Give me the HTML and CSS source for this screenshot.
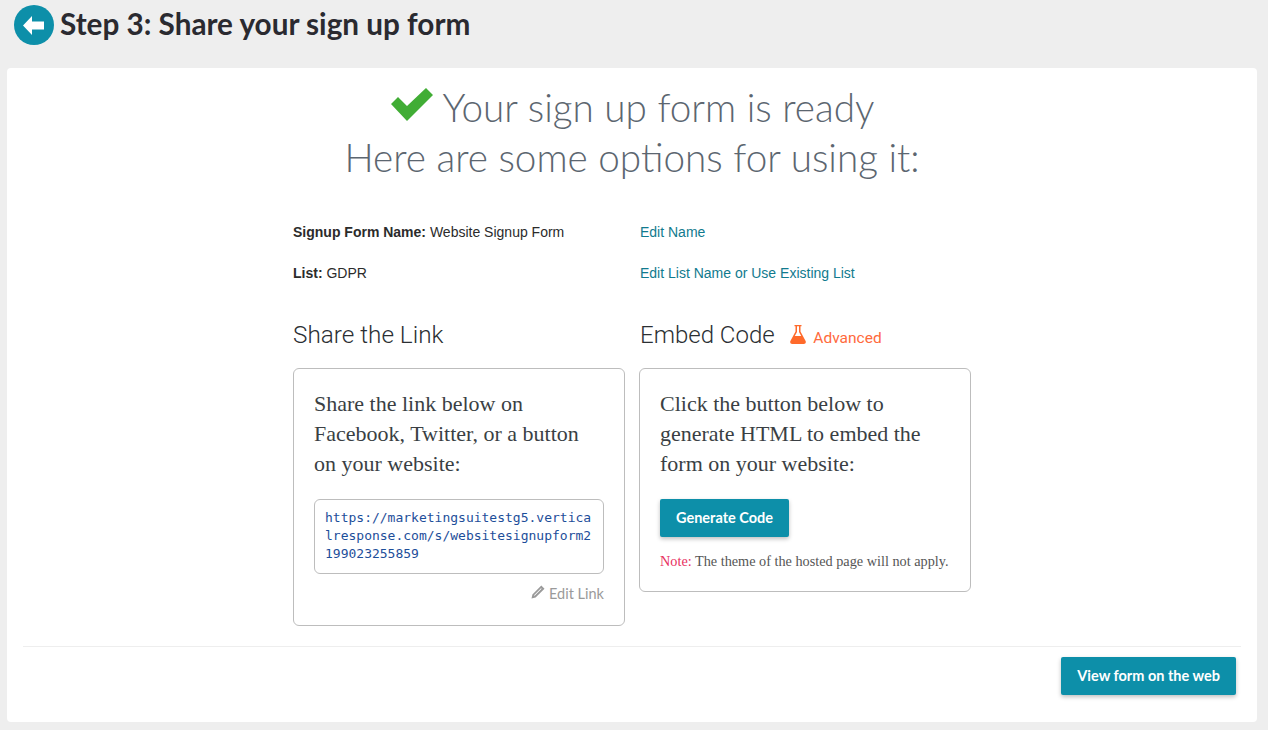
FILE: index.html
```html
<!DOCTYPE html>
<html lang="en">
<head>
  <meta charset="UTF-8">
  <title>Step 3: Share your sign up form</title>
  <link rel="stylesheet" href="styles.css">
</head>
<body>
  <!-- Header -->
  <div class="page-header">
    <a class="back-button" href="#">
      <svg width="40" height="40" viewBox="0 0 40 40"><circle cx="20" cy="20" r="20" fill="#0D8FA9"/><path d="M9 20.5 L18 11 V16.5 H30 V24.5 H18 V30 Z" fill="#fff"/></svg>
    </a>
    <h1 class="page-title">Step 3: Share your sign up form</h1>
  </div>

  <div class="card">
    <!-- Heading -->
    <div class="ready-heading">
      <div>
        <svg class="check" width="44" height="36" viewBox="0 0 44 36"><path d="M1 17 L8 10 L17 19 L36 1 L43 8 L17 34 Z" fill="#41AD35"/></svg>
        Your sign up form is ready
      </div>
      <div>Here are some options for using it:</div>
    </div>

    <div class="options">
      <!-- Form details -->
      <div class="detail-row">
        <div><strong>Signup Form Name:</strong> Website Signup Form</div>
        <a href="#">Edit Name</a>
      </div>
      <div class="detail-row">
        <div><strong>List:</strong> GDPR</div>
        <a href="#">Edit List Name or Use Existing List</a>
      </div>

      <div class="columns">
        <div>
          <h2 class="column-title">Share the Link</h2>
          <div class="box">
            <p class="box-text">Share the link below on Facebook, Twitter, or a button on your website:</p>
            <div class="link-box">https://marketingsuitestg5.vertica<br>lresponse.com/s/websitesignupform2<br>199023255859</div>
            <div class="edit-link">
              <svg width="14" height="14" viewBox="0 0 14 14"><path d="M10.3 0.5 L13.5 3.7 L4.6 12.6 L0.5 13.5 L1.4 9.4 Z M10 3.2 L3 10.2 L3.6 10.8 L10.6 3.8 Z" fill="#9A9A9A" fill-rule="evenodd"/></svg>
              Edit Link
            </div>
          </div>
        </div>
        <div>
          <h2 class="column-title embed-title">Embed Code
            <span class="advanced">
              <svg width="16" height="19" viewBox="0 0 16 19"><path d="M4.5 0 H11.5 V1.3 H10.5 V6.5 L15.6 16 C16.3 17.5 15.4 19 13.8 19 H2.2 C0.6 19 -0.3 17.5 0.4 16 L5.5 6.5 V1.3 H4.5 Z M7 1.3 V7 L4.8 11 H11.2 L9 7 V1.3 Z" fill="#FF6A2B" fill-rule="evenodd"/></svg>
              Advanced
            </span>
          </h2>
          <div class="box">
            <p class="box-text">Click the button below to generate HTML to embed the form on your website:</p>
            <a class="teal-button" href="#">Generate Code</a>
            <p class="note"><span class="note-label">Note:</span> The theme of the hosted page will not apply.</p>
          </div>
        </div>
      </div>
    </div>

    <!-- Footer -->
    <div class="card-footer">
      <a class="teal-button" href="#">View form on the web</a>
    </div>
  </div>
</body>
</html>
```

FILE: styles.css
```css
* {
  box-sizing: border-box;
  margin: 0;
  padding: 0;
}

body {
  font-family: 'Liberation Sans', sans-serif;
  background-color: #EEEEEE;
  color: #2B2B2B;
  height: 730px;
  overflow: hidden;
}

a {
  text-decoration: none;
}

.page-header {
  height: 68px;
  display: flex;
  align-items: flex-start;
  padding: 5px 0 0 14px;
  gap: 6px;
}

.back-button {
  display: block;
  height: 40px;
}

.page-title {
  font-family: 'Lato', sans-serif;
  font-size: 29.7px;
  font-weight: 700;
  line-height: 38px;
  color: #2A2A30;
}

.card {
  margin: 0 11px 0 7px;
  height: 654px;
  background-color: #FFFFFF;
  border-radius: 4px;
  padding: 14px 16px 0;
}

.ready-heading {
  font-family: 'Lato', sans-serif;
  font-weight: 300;
  font-size: 38.7px;
  line-height: 50px;
  text-align: center;
  color: #5C6670;
  height: 134px;
}

.check {
  vertical-align: -1px;
}

.options {
  width: 678px;
  margin-left: 270px;
  font-size: 14px;
}

.detail-row {
  display: grid;
  grid-template-columns: 347px 1fr;
  height: 41px;
  line-height: 32px;
}

.detail-row a {
  color: #117A8E;
}

.columns {
  display: grid;
  grid-template-columns: 332px 332px;
  column-gap: 14px;
  align-items: start;
  margin-top: 20px;
}

.column-title {
  font-family: 'Roboto', sans-serif;
  font-size: 24.3px;
  font-weight: 300;
  line-height: 34px;
  height: 34px;
  color: #2B2F33;
  margin-bottom: 16px;
  white-space: nowrap;
}

.embed-title {
  font-size: 24px;
  padding-left: 1px;
}

.advanced {
  font-size: 15.5px;
  font-weight: 400;
  color: #FF6A3C;
  margin-left: 10px;
}

.advanced svg {
  vertical-align: -1px;
  margin-right: 3px;
}

.box {
  border: 1px solid #BDBDBD;
  border-radius: 6px;
  padding: 20px;
}

.box-text {
  font-family: 'Liberation Serif', serif;
  font-size: 22px;
  line-height: 30px;
  color: #3A3F44;
  margin-bottom: 20px;
}

.link-box {
  font-family: 'DejaVu Sans Mono', monospace;
  font-size: 13px;
  line-height: 18px;
  color: #1D4E9A;
  border: 1px solid #BDBDBD;
  border-radius: 6px;
  padding: 9px 0 9px 10px;
  white-space: nowrap;
  height: 75px;
}

.edit-link {
  font-family: 'Lato', sans-serif;
  font-size: 14.5px;
  color: #9A9A9A;
  text-align: right;
  margin-top: 11px;
  height: 20px;
  line-height: 18px;
}

.teal-button {
  display: inline-block;
  font-family: 'Lato', sans-serif;
  font-size: 14.5px;
  font-weight: 700;
  color: #FFFFFF;
  background-color: #0D8FA9;
  border-radius: 2px;
  padding: 0 16px;
  line-height: 38px;
  box-shadow: 0 2px 4px rgba(0, 0, 0, 0.25);
}

.note {
  font-family: 'Liberation Serif', serif;
  font-size: 14.25px;
  color: #555555;
  margin-top: 15px;
  margin-bottom: 1px;
  line-height: 18px;
}

.note-label {
  color: #E8305F;
}

.card-footer {
  margin-top: 20px;
  border-top: 1px solid #EEEEEE;
  padding: 10px 5px 0 0;
  text-align: right;
}
```
